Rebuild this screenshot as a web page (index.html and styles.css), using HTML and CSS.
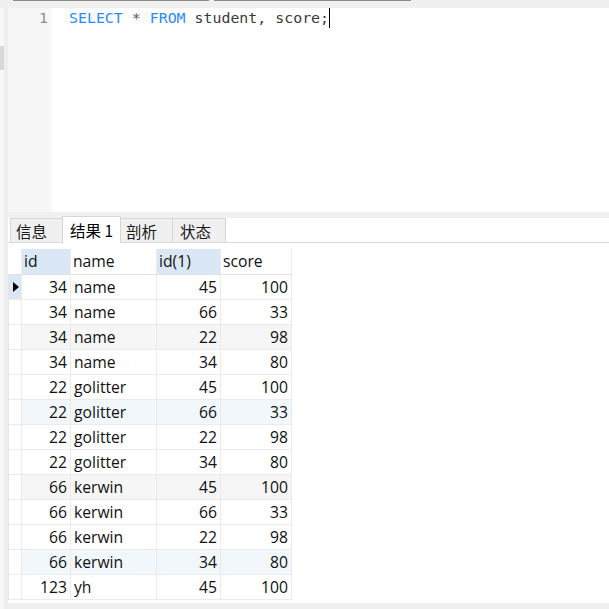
FILE: index.html
```html
<!DOCTYPE html>
<html>
<head>
<meta charset="utf-8">
<link rel="stylesheet" href="styles.css">
</head>
<body>
<div class="window">
  <div class="topstrip">
    <span class="toptab toptab-a"></span>
    <span class="toptab toptab-b"></span>
  </div>
  <div class="body">
    <div class="side"><div class="thumb"></div></div>
    <div class="pane">
      <div class="editor">
        <div class="gutter"><span class="lineno">1</span></div>
        <div class="code"><span class="kw">SELECT</span> <span class="op">*</span> <span class="kw">FROM</span> <span class="id">student, score;</span><span class="caret"></span></div>
      </div>
      <div class="tabbar">
        <div class="tab tab-info">信息</div>
        <div class="tab tab-result active">结果 1</div>
        <div class="tab tab-profile">剖析</div>
        <div class="tab tab-status">状态</div>
      </div>
      <div class="results">
        <table class="grid">
          <colgroup>
            <col class="c-ind"><col class="c-id"><col class="c-name"><col class="c-id1"><col class="c-score">
          </colgroup>
          <thead>
            <tr>
              <th class="ind"></th>
              <th class="hl">id</th>
              <th>name</th>
              <th class="hl">id(1)</th>
              <th>score</th>
            </tr>
          </thead>
          <tbody>
            <tr class="cur"><td class="ind"><span class="arrow"></span></td><td class="num">34</td><td>name</td><td class="num">45</td><td class="num">100</td></tr>
            <tr><td class="ind"></td><td class="num">34</td><td>name</td><td class="num">66</td><td class="num">33</td></tr>
            <tr class="gray"><td class="ind"></td><td class="num">34</td><td>name</td><td class="num">22</td><td class="num">98</td></tr>
            <tr><td class="ind"></td><td class="num">34</td><td>name</td><td class="num">34</td><td class="num">80</td></tr>
            <tr><td class="ind"></td><td class="num">22</td><td>golitter</td><td class="num">45</td><td class="num">100</td></tr>
            <tr class="blue"><td class="ind"></td><td class="num">22</td><td>golitter</td><td class="num">66</td><td class="num">33</td></tr>
            <tr><td class="ind"></td><td class="num">22</td><td>golitter</td><td class="num">22</td><td class="num">98</td></tr>
            <tr><td class="ind"></td><td class="num">22</td><td>golitter</td><td class="num">34</td><td class="num">80</td></tr>
            <tr class="gray"><td class="ind"></td><td class="num">66</td><td>kerwin</td><td class="num">45</td><td class="num">100</td></tr>
            <tr><td class="ind"></td><td class="num">66</td><td>kerwin</td><td class="num">66</td><td class="num">33</td></tr>
            <tr><td class="ind"></td><td class="num">66</td><td>kerwin</td><td class="num">22</td><td class="num">98</td></tr>
            <tr class="blue"><td class="ind"></td><td class="num">66</td><td>kerwin</td><td class="num">34</td><td class="num">80</td></tr>
            <tr><td class="ind"></td><td class="num">123</td><td>yh</td><td class="num">45</td><td class="num">100</td></tr>
          </tbody>
        </table>
      </div>
      <div class="bottomstrip"></div>
    </div>
  </div>
</div>
</body>
</html>
```
FILE: styles.css
```css
html, body {
  margin: 0;
  padding: 0;
  background: #ffffff;
}
.window {
  width: 609px;
  height: 609px;
  overflow: hidden;
  display: flex;
  flex-direction: column;
}
.topstrip {
  height: 8px;
  flex: 0 0 8px;
  background: #f0f0f0;
  display: flex;
  align-items: flex-start;
  padding-left: 13px;
  gap: 5px;
}
.toptab {
  height: 1px;
  background: #8a8a8a;
}
.toptab-a { width: 196px; }
.toptab-b { width: 197px; }
.body {
  flex: 1;
  display: flex;
  min-height: 0;
}
.side {
  width: 4px;
  flex: 0 0 4px;
  background: #f7f7f7;
  border-right: 4px solid #eeeeee;
}
.thumb {
  margin-top: 38px;
  height: 24px;
  background: #d9d9d9;
}
.pane {
  flex: 1;
  display: flex;
  flex-direction: column;
  min-width: 0;
}
.editor {
  height: 204px;
  flex: 0 0 204px;
  display: flex;
  background: #ffffff;
}
.gutter {
  width: 44px;
  background: #f7f7f7;
  font-family: "DejaVu Sans Mono", monospace;
  font-size: 14.9px;
  color: #8f8f8f;
  text-align: right;
  box-sizing: border-box;
  padding-right: 4px;
  line-height: 20px;
}
.code {
  flex: 1;
  font-family: "DejaVu Sans Mono", monospace;
  font-size: 14.9px;
  line-height: 20px;
  padding-left: 17px;
  white-space: pre;
  color: #3a3a3a;
}
.kw { color: #2a8bff; }
.op { color: #4a5a6a; }
.id { color: #3a3a3a; }
.caret {
  display: inline-block;
  width: 1px;
  height: 20px;
  background: #000;
  vertical-align: top;
}
.tabbar {
  height: 31px;
  flex: 0 0 31px;
  box-sizing: border-box;
  border-top: 6px solid #f0f0f0;
  border-bottom: 1px solid #dadada;
  display: flex;
  align-items: flex-end;
  padding-left: 2px;
  font-family: "Noto Sans CJK SC", sans-serif;
  font-size: 15.5px;
  color: #1a1a1a;
}
.tab {
  box-sizing: border-box;
  height: 24px;
  line-height: 24px;
  padding-left: 5px;
  background: #f0f0f0;
  border: 1px solid #d6d6d6;
  border-bottom: none;
  margin-left: -1px;
}
.tab-info { width: 53px; margin-left: 0; }
.tab-result { width: 59px; }
.tab-profile { width: 53px; }
.tab-status { width: 54px; padding-left: 7px; }
.tab.active {
  background: #ffffff;
  height: 27px;
  line-height: 27px;
  margin-bottom: -1px;
  padding-left: 7px;
  position: relative;
  z-index: 1;
  color: #000;
}
.results {
  flex: 1;
  padding-top: 6px;
  min-height: 0;
}
.grid {
  border-collapse: collapse;
  table-layout: fixed;
  width: 283px;
  font-family: "Open Sans", sans-serif;
  font-size: 15.7px;
  color: #111;
}
.c-ind { width: 13px; }
.c-id { width: 49px; }
.c-name { width: 86px; }
.c-id1 { width: 64px; }
.c-score { width: 71px; }
.grid th, .grid td {
  height: 25px;
  padding: 0 3px;
  border-right: 1px solid #ebebeb;
  border-bottom: 1px solid #ebebeb;
  white-space: nowrap;
  overflow: hidden;
  box-sizing: border-box;
  line-height: 24px;
}
.grid th {
  font-weight: normal;
  text-align: left;
  padding-left: 2px;
  border-bottom: 1px solid #e3e3e3;
}
.grid th.hl { background: #dae8f6; }
.grid td.num { text-align: right; }
.grid .ind {
  padding: 0;
  border-left: 1px solid #e6e6e6;
}
.grid th.ind { border-left: none; }
.grid tr.cur td.ind { background: #dae8f6; }
.grid tr.gray td { background: #f6f6f6; }
.grid tr.blue td { background: #f2f7fc; }
.grid tr.gray td.ind, .grid tr.blue td.ind { background: #ffffff; }
.arrow {
  display: block;
  width: 0;
  height: 0;
  margin-left: 4px;
  border-top: 5px solid transparent;
  border-bottom: 5px solid transparent;
  border-left: 6px solid #000;
}
.bottomstrip {
  height: 6px;
  flex: 0 0 6px;
  background: #f0f0f0;
}
```
